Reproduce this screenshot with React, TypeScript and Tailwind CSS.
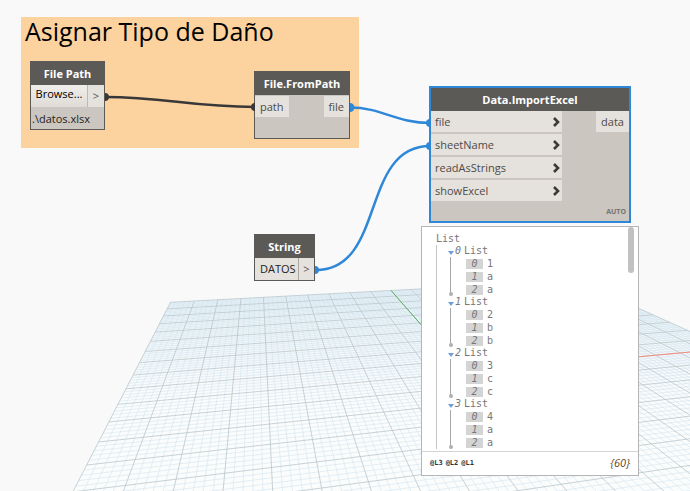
type Point = [number, number];

const GRID_SIZE = 20;
const MINOR_STEPS = 5;

// perspective projection of the ground plane onto the workspace
function project(u: number, v: number): Point {
  const w = 1 + 0.0094 * u - 0.0381 * v;
  return [
    (170.5 + 25.73 * u - 9.75 * v) / w,
    (302.3 + 1.55 * u - 5.2 * v) / w,
  ];
}

function segment(from: Point, to: Point) {
  return `M${from[0].toFixed(2)} ${from[1].toFixed(2)}L${to[0].toFixed(2)} ${to[1].toFixed(2)}`;
}

function gridPath(major: boolean) {
  const parts: string[] = [];
  for (let i = 0; i <= GRID_SIZE * MINOR_STEPS; i++) {
    if ((i % MINOR_STEPS === 0) !== major) continue;
    const t = i / MINOR_STEPS;
    parts.push(segment(project(t, 0), project(t, GRID_SIZE)));
    parts.push(segment(project(0, t), project(GRID_SIZE, t)));
  }
  return parts.join('');
}

const majorLines = gridPath(true);
const minorLines = gridPath(false);
const groundOutline = [
  project(0, 0),
  project(GRID_SIZE, 0),
  project(GRID_SIZE, GRID_SIZE),
  project(0, GRID_SIZE),
]
  .map((p) => p.join(','))
  .join(' ');

const inputPorts = ['file', 'sheetName', 'readAsStrings', 'showExcel'];

const lists = [
  ['1', 'a', 'a'],
  ['2', 'b', 'b'],
  ['3', 'c', 'c'],
  ['4', 'a', 'a'],
];

function GroundGrid() {
  return (
    <svg className="absolute top-0 left-0 w-full h-full overflow-visible" aria-hidden="true">
      <defs>
        <linearGradient id="haze" gradientUnits="userSpaceOnUse" x1="0" y1="280" x2="0" y2="400">
          <stop offset="0" stopColor="#eaf2f7" />
          <stop offset="1" stopColor="#fbfcfc" />
        </linearGradient>
      </defs>
      <polygon points={groundOutline} fill="url(#haze)" />
      <path d={minorLines} stroke="#d0e4ef" strokeWidth="0.55" fill="none" />
      <path d={majorLines} stroke="#b6c4ca" strokeWidth="0.75" fill="none" />
      <path d={segment(project(10, 0), project(10, 10))} stroke="#5cb060" strokeWidth="1" />
      <path d={segment(project(10, 10), project(20, 10))} stroke="#f58c80" strokeWidth="1" />
    </svg>
  );
}

function Wires() {
  return (
    <svg className="absolute top-0 left-0 w-full h-full pointer-events-none" fill="none" aria-hidden="true">
      <path d="M105 97C165 97 190 107 255 107" stroke="#383838" strokeWidth="2.5" />
      <path d="M105 93a4 4 0 0 1 0 8zM255 103a4 4 0 0 0 0 8z" fill="#383838" />
      <g stroke="#2f87d8" strokeWidth="2.5">
        <path d="M350 107.500C382 107.500 396 123 430 123" />
        <path d="M316 270C386 270 360 146 430 146" />
      </g>
      <path
        d="M350 103a4 4 0 0 1 0 9zM315 266a4 4 0 0 1 0 8zM430 119a4 4 0 0 0 0 8zM430 142a4 4 0 0 0 0 8z"
        fill="#2f87d8"
      />
    </svg>
  );
}

function NodeTitle({ children }: { children: string }) {
  return (
    <h2 className="h-[23px] bg-[#5c5a57] text-center text-[11px] leading-[23px] font-bold text-white">
      {children}
    </h2>
  );
}

function FilePathNode() {
  return (
    <section className="absolute top-[61px] left-[30px] w-[75px] border border-[#5c5a57] bg-[#cbc6bf]">
      <NodeTitle>File Path</NodeTitle>
      <div className="flex h-[22px] text-[11px]">
        <button className="flex-1 bg-linear-to-b from-[#f0eeeb] to-[#dfdbd6] pb-1 text-black">
          Browse...
        </button>
        <span className="w-[17px] border-l border-[#bdb8b1] bg-[#e5e1dc] text-center leading-[22px] text-[#555]">
          &gt;
        </span>
      </div>
      <p className="h-[22px] pl-px text-[11px] leading-[23px] whitespace-nowrap text-[#222]">.\datos.xlsx</p>
    </section>
  );
}

function FromPathNode() {
  return (
    <section className="absolute top-[71px] left-[254px] h-[68px] w-24 border border-[#5c5a57] bg-[#cbc6bf]">
      <NodeTitle>File.FromPath</NodeTitle>
      <div className="flex justify-between pt-px text-[11px] leading-[21px] text-[#4d4b48]">
        <span className="bg-[#e5e1dc] px-[5px]">path</span>
        <span className="bg-[#e5e1dc] px-[5px]">file</span>
      </div>
    </section>
  );
}

function StringNode() {
  return (
    <section className="absolute top-[234px] left-[254px] w-[61px] border border-[#5c5a57] bg-[#e5e1dc]">
      <NodeTitle>String</NodeTitle>
      <div className="flex h-[22px] text-[11px] leading-[22px]">
        <input
          aria-label="String value"
          defaultValue="DATOS"
          className="w-0 flex-1 bg-[#e5e1dc] pl-[5px] text-[11px] text-[#222] outline-none"
        />
        <span className="w-4 border-l border-[#aaa59e] text-center text-[#555]">&gt;</span>
      </div>
    </section>
  );
}

function ImportExcelNode() {
  return (
    <section className="absolute top-[86px] left-[429px] h-[137px] w-[202px] border-2 border-[#2f87d8] bg-[#cbc6bf]">
      <NodeTitle>Data.ImportExcel</NodeTitle>
      <div className="flex items-start justify-between text-[11px] leading-[21px] text-[#4d4b48]">
        <ul className="flex w-[131px] flex-col gap-[2px]">
          {inputPorts.map((port) => (
            <li key={port} className="flex items-center justify-between bg-[#e5e1dc] pr-[2px] pl-1">
              {port}
              <svg width="7" height="10" viewBox="0 0 7 10" fill="none" aria-hidden="true">
                <path d="M1 1l4 4-4 4" stroke="#3d3b39" strokeWidth="2.600" />
              </svg>
            </li>
          ))}
        </ul>
        <span className="bg-[#e5e1dc] px-[5px]">data</span>
      </div>
      <span className="absolute right-[3px] bottom-1 text-[7px] leading-[10px] font-bold text-[#77736e]">
        AUTO
      </span>
    </section>
  );
}

function ListGroup({ index, items }: { index: number; items: string[] }) {
  return (
    <li>
      <div className="flex h-3 items-center">
        <svg className="mt-1 mr-px" width="6" height="4" viewBox="0 0 6 4" aria-hidden="true">
          <path d="M0 0h6L3 4z" fill="#6d9fd6" />
        </svg>
        <i className="mr-[3px]">{index}</i>
        List
      </div>
      <div className="relative ml-[2px] border-l border-[#a8a8a8]">
        <ol className="ml-[15px]">
          {items.map((item, i) => (
            <li key={i} className="flex h-[13px] items-center gap-1">
              <i className="h-[10px] w-[17px] bg-[#d4d4d4] text-center leading-[10px]">{i}</i>
              {item}
            </li>
          ))}
        </ol>
        <span className="absolute bottom-0 -left-[2px] size-1 rounded-full bg-[#b0b0b0]" />
      </div>
    </li>
  );
}

function PreviewPanel() {
  return (
    <section className="absolute top-[226px] left-[421px] flex h-[250px] w-[218px] flex-col border border-[#b5b5b5] bg-white">
      <div className="relative flex-1 overflow-hidden pt-[6px] pl-[14px] font-['DejaVu_Sans_Mono',monospace] text-[10px] leading-3 text-[#777]">
        <p>List</p>
        <ul className="border-l border-[#c4c4c4] pl-[11px]">
          {lists.map((items, i) => (
            <ListGroup key={i} index={i} items={items} />
          ))}
        </ul>
        <span className="absolute top-0 right-1 h-[46px] w-[6px] rounded-full bg-[#c1c1c1]" />
      </div>
      <footer className="flex h-6 items-center justify-between border-t border-[#d5d5d5] px-2">
        <div className="flex gap-[3px] font-['DejaVu_Sans_Mono',monospace] text-[7px] font-bold text-[#333]">
          <span>@L3</span>
          <span>@L2</span>
          <span>@L1</span>
        </div>
        <i className="text-[11px] text-[#65452a]">&#123;60&#125;</i>
      </footer>
    </section>
  );
}

export default function App() {
  return (
    <main className="relative min-h-screen w-full overflow-hidden bg-[#f9f9f9] font-['Open_Sans',sans-serif]">
      <GroundGrid />

      {/* Annotation group */}
      <section className="absolute top-[17px] left-[21px] h-[131px] w-[338px] bg-[#fcd29f] pl-1">
        <h1 className="text-[25px] leading-[28px] whitespace-nowrap text-black">Asignar Tipo de Daño</h1>
      </section>

      {/* Nodes */}
      <FilePathNode />
      <FromPathNode />
      <StringNode />
      <ImportExcelNode />
      <PreviewPanel />
      <Wires />
    </main>
  );
}
